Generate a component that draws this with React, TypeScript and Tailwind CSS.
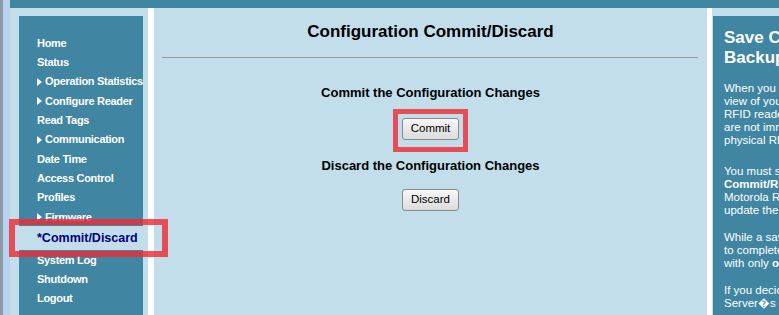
import type { ReactNode } from 'react';

const NAV: { label: string; arrow?: boolean; active?: boolean }[] = [
  { label: 'Home' },
  { label: 'Status' },
  { label: 'Operation Statistics', arrow: true },
  { label: 'Configure Reader', arrow: true },
  { label: 'Read Tags' },
  { label: 'Communication', arrow: true },
  { label: 'Date Time' },
  { label: 'Access Control' },
  { label: 'Profiles' },
  { label: 'Firmware', arrow: true },
  { label: '*Commit/Discard', active: true },
  { label: 'System Log' },
  { label: 'Shutdown' },
  { label: 'Logout' },
];

function Arrow() {
  return (
    <svg width="5" height="8" viewBox="0 0 5 8" className="mr-[3px] shrink-0">
      <path d="M0 0 L5 4 L0 8 Z" fill="#fff" />
    </svg>
  );
}

function Btn({ children }: { children: ReactNode }) {
  return (
    <button className="flex h-[22px] w-[57px] items-center justify-center rounded-[3px] border border-[#8a8a8a] bg-gradient-to-b from-[#f7f7f7] to-[#dcdcdc] text-[11.5px] text-black">
      {children}
    </button>
  );
}

export default function App() {
  return (
    <div className="flex h-[315px] w-[779px] overflow-hidden bg-[#c2deea] font-['Liberation_Sans',Arial,sans-serif]">
      {/* window edge */}
      <div className="w-[3px] bg-[#8e9aa5]" />
      <div className="w-[5px] bg-[#b4d3f3]" />
      <div className="w-[2px] bg-[#b9d4e6]" />

      <div className="flex min-w-0 flex-1 flex-col">
        <div className="h-[8px] bg-[#4086a3]" />
        <div className="flex flex-1">
          {/* sidebar */}
          <div className="w-[138px] pl-[9px] pt-[8px] pr-[5px]">
            <div className="h-full bg-[#4086a3] pt-[17.5px]">
              {NAV.map((n) =>
                n.active ? (
                  <div key={n.label} className="flex h-[24px] items-center bg-[#c2deea] pl-[18px] text-[12.5px] font-bold text-[#00007f]">
                    {n.label}
                  </div>
                ) : (
                  <div key={n.label} className="flex h-[19.3px] items-center whitespace-nowrap pl-[18px] text-[11px] font-bold tracking-[-0.3px] text-white">
                    {n.arrow && <Arrow />}
                    {n.label}
                  </div>
                )
              )}
            </div>
          </div>
          <div className="w-[6px] bg-white" />

          {/* main */}
          <div className="flex w-[553px] flex-col items-center pt-[14px]">
            <h1 className="text-[17px] font-bold leading-[20px] text-black">Configuration Commit/Discard</h1>
            <div className="mt-[15px] ml-[8px] mr-[9px] self-stretch border-t border-[#999]" />
            <p className="mt-[27px] text-[13px] font-bold leading-[16px] text-black">Commit the Configuration Changes</p>
            <div className="relative mt-[17px]">
              <Btn>Commit</Btn>
              <div className="absolute -left-[9px] -right-[9px] -top-[9px] -bottom-[12px] border-[5px] border-[rgba(240,40,50,0.8)]" />
            </div>
            <p className="mt-[18px] text-[13px] font-bold leading-[16px] text-black">Discard the Configuration Changes</p>
            <div className="mt-[15px]">
              <Btn>Discard</Btn>
            </div>
          </div>
          <div className="w-[5px] bg-white" />

          {/* help panel */}
          <div className="min-w-0 flex-1 pl-[1px] pt-[8px]">
            <div className="h-full w-[220px] whitespace-nowrap bg-[#4086a3] pl-[11px] pt-[12px] text-white">
              <div className="text-[17px] font-bold leading-[20px]">
                Save Changes and
                <br />
                Backup Configuration
              </div>
              <div className="mt-[14px] text-[11.5px] leading-[13px]">
                <p className="mb-[18px]">
                  When you make changes, the
                  <br />
                  view of your configuration in the
                  <br />
                  RFID reader is updated, but these
                  <br />
                  are not immediately saved to the
                  <br />
                  physical RFID reader.
                </p>
                <p className="mb-[14px]">
                  You must select
                  <br />
                  <b>Commit/Revert</b> to save the
                  <br />
                  Motorola RFID reader and
                  <br />
                  update the configuration.
                </p>
                <p className="mb-[14px]">
                  While a save is in progress, wait
                  <br />
                  to complete the operation
                  <br />
                  with only <b>one</b> session open.
                </p>
                <p>
                  If you decide to discard, the
                  <br />
                  Server{'\uFFFD'}s configuration is restored.
                </p>
              </div>
            </div>
          </div>
        </div>
      </div>

      {/* annotation around the active menu item */}
      <div className="pointer-events-none absolute left-[9px] top-[219px] h-[38px] w-[159px] border-[6px] border-[rgba(240,40,50,0.8)]" />
    </div>
  );
}
